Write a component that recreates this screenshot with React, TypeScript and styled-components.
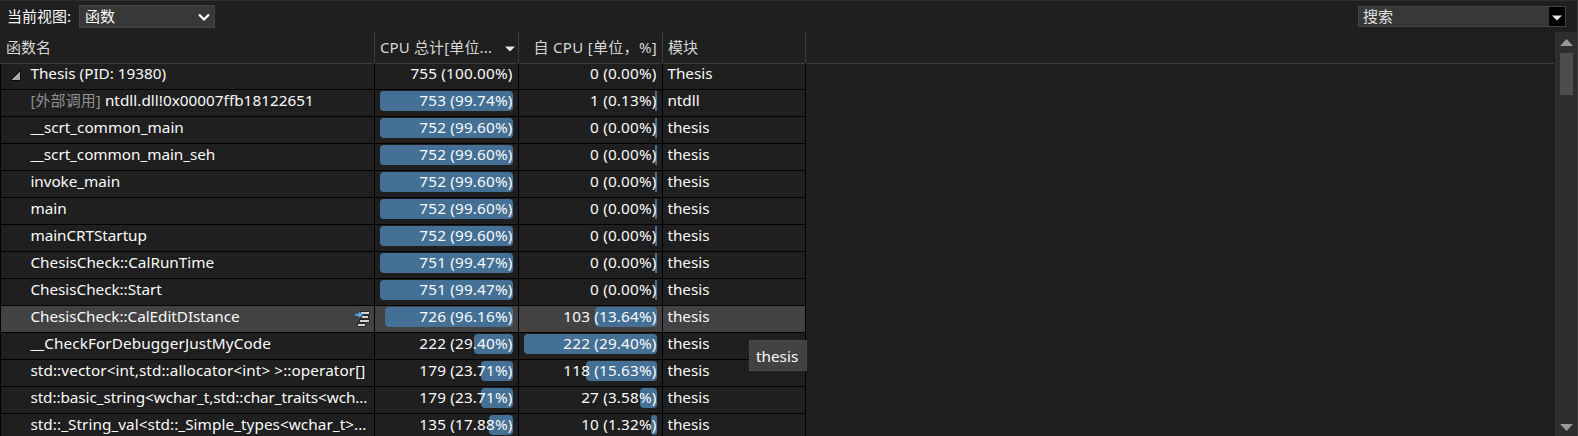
import React from "react";
import styled, { createGlobalStyle } from "styled-components";

const GlobalStyle = createGlobalStyle`
  * { box-sizing: border-box; }
  body {
    margin: 0;
    background: #1f1f1f;
    color: #fafafa;
    font-family: "Noto Sans", "Noto Sans CJK SC", sans-serif;
    font-size: 15.3px;
    line-height: 20px;
    overflow: hidden;
  }
`;

const Panel = styled.div`
  position: relative;
  display: flex;
  flex-direction: column;
  width: 1578px;
  height: 436px;
  overflow: hidden;
  background: #1f1f1f;
  border-top: 1px solid #2e2e2e;
  border-right: 1px solid #3d3d3d;
`;

const Toolbar = styled.div`
  display: flex;
  flex: none;
  align-items: flex-start;
  height: 31px;
  padding: 4px 11px 0 7px;
  font-size: 15px;
`;

const Label = styled.label`
  width: 72px;
  padding-top: 1px;
  white-space: nowrap;
`;

const Select = styled.div`
  display: flex;
  justify-content: space-between;
  width: 136px;
  height: 23px;
  padding: 0 3px 0 5px;
  background: #383838;
  border: 1px solid #434343;
`;

const SearchBox = styled.div`
  display: flex;
  justify-content: space-between;
  width: 208px;
  height: 21px;
  margin: 1px 0 0 auto;
  padding-left: 4px;
  background: #383838;
  border: 1px solid #434343;
  color: #e0e0e0;
  line-height: 18px;
`;

const SearchButton = styled.div`
  display: flex;
  width: 16px;
  height: 19px;
  background: #000;
`;

const Content = styled.div`
  display: flex;
  flex: 1;
  min-height: 0;
`;

const Table = styled.div`
  display: flex;
  flex: 1;
  flex-direction: column;
  min-width: 0;
  overflow: hidden;
`;

const columns = "374px 144px 144px 143px";

const Header = styled.div`
  display: grid;
  flex: none;
  grid-template-columns: ${columns};
  height: 32px;
  margin-right: 1px;
  padding-left: 1px;
  border-bottom: 1px solid #3d3d3d;
  color: #d6d6d6;
  font-size: 15px;
`;

const HeaderCell = styled.div<{ $right?: boolean; $spacing?: number }>`
  display: flex;
  justify-content: ${(p) => (p.$right ? "flex-end" : "flex-start")};
  padding: 5px 5px 0;
  border-right: 1px solid #3d3d3d;
  white-space: nowrap;
  letter-spacing: ${(p) => p.$spacing ?? 0}px;
`;

const Body = styled.div`
  width: 806px;
  border-left: 1px solid #000;
`;

const Row = styled.div<{ $selected: boolean; $first: boolean }>`
  display: grid;
  grid-template-columns: ${columns};
  height: 27px;
  margin-top: ${(p) => (p.$first ? -1 : 0)}px;
  background: ${(p) => (p.$selected ? "#424242" : "transparent")};
`;

const Cell = styled.div`
  display: flex;
  min-width: 0;
  border-right: 1px solid #000;
  border-bottom: 1px solid #000;
  white-space: nowrap;
`;

const NameCell = styled(Cell)`
  padding-left: 9px;
`;

const Toggle = styled.div`
  flex: none;
  width: 20.4px;
  padding-top: 6px;
  line-height: 0;
`;

const Name = styled.span<{ $spacing: number }>`
  letter-spacing: ${(p) => p.$spacing}px;
`;

const External = styled.span`
  color: #929292;
  font-size: 15px;
  letter-spacing: 0.1px;
`;

const RowAction = styled.div`
  margin: 4px 3px 0 auto;
  line-height: 0;
`;

const MetricCell = styled(Cell)`
  padding: 1px 5px 0;
`;

const Metric = styled.div<{ $bar: number }>`
  display: grid;
  justify-items: end;
  width: 133px;
  height: 20px;
  line-height: 18px;
  letter-spacing: 0.17px;

  &::before {
    content: "";
    grid-area: 1 / 1;
    width: ${(p) => p.$bar}px;
    height: 20px;
    background: #437094;
    border-radius: ${(p) => (p.$bar > 4 ? 4 : 0)}px;
  }
`;

const Value = styled.span`
  grid-area: 1 / 1;
  z-index: 1;
  padding-right: 0.4px;
`;

const ModuleCell = styled(Cell)`
  padding-left: 4.4px;
`;

const Scrollbar = styled.div`
  display: flex;
  flex: none;
  flex-direction: column;
  align-items: center;
  width: 22px;
  padding: 7px 0 5px;
  background: #2e2e2e;
`;

const Thumb = styled.div`
  width: 13px;
  height: 42px;
  margin: 7px 0 auto;
  background: #4d4d4d;
`;

const Tooltip = styled.div`
  position: absolute;
  top: 339px;
  left: 749px;
  width: 58px;
  height: 31px;
  padding: 5px 0 0 6px;
  background: #424242;
  border: 1px solid #4a4a4a;
`;

type Entry = {
  name: string;
  external?: string;
  total: string;
  totalBar: number;
  self: string;
  selfBar: number;
  module?: string;
  spacing?: number;
  root?: boolean;
  selected?: boolean;
};

const entries: Entry[] = [
  { name: "Thesis (PID: 19380)", total: "755 (100.00%)", totalBar: 0, self: "0 (0.00%)", selfBar: 0, module: "Thesis", root: true },
  { name: "ntdll.dll!0x00007ffb18122651", external: "[外部调用]", total: "753 (99.74%)", totalBar: 133, self: "1 (0.13%)", selfBar: 2, module: "ntdll", spacing: 0.02 },
  { name: "__scrt_common_main", total: "752 (99.60%)", totalBar: 133, self: "0 (0.00%)", selfBar: 2, spacing: -0.03 },
  { name: "__scrt_common_main_seh", total: "752 (99.60%)", totalBar: 133, self: "0 (0.00%)", selfBar: 2, spacing: -0.06 },
  { name: "invoke_main", total: "752 (99.60%)", totalBar: 133, self: "0 (0.00%)", selfBar: 2, spacing: -0.05 },
  { name: "main", total: "752 (99.60%)", totalBar: 133, self: "0 (0.00%)", selfBar: 2 },
  { name: "mainCRTStartup", total: "752 (99.60%)", totalBar: 133, self: "0 (0.00%)", selfBar: 2, spacing: -0.05 },
  { name: "ChesisCheck::CalRunTime", total: "751 (99.47%)", totalBar: 133, self: "0 (0.00%)", selfBar: 2 },
  { name: "ChesisCheck::Start", total: "751 (99.47%)", totalBar: 133, self: "0 (0.00%)", selfBar: 2, spacing: -0.04 },
  { name: "ChesisCheck::CalEditDIstance", total: "726 (96.16%)", totalBar: 128, self: "103 (13.64%)", selfBar: 62, spacing: -0.05, selected: true },
  { name: "__CheckForDebuggerJustMyCode", total: "222 (29.40%)", totalBar: 39, self: "222 (29.40%)", selfBar: 133, spacing: 0.1 },
  { name: "std::vector<int,std::allocator<int> >::operator[]", total: "179 (23.71%)", totalBar: 32, self: "118 (15.63%)", selfBar: 71, spacing: 0.09 },
  { name: "std::basic_string<wchar_t,std::char_traits<wch...", total: "179 (23.71%)", totalBar: 32, self: "27 (3.58%)", selfBar: 17, spacing: -0.07 },
  { name: "std::_String_val<std::_Simple_types<wchar_t>...", total: "135 (17.88%)", totalBar: 24, self: "10 (1.32%)", selfBar: 6, spacing: 0.06 },
];

const DownTriangle = () => (
  <svg width="10" height="6" viewBox="0 0 10 6">
    <path d="M0 .5h10L5 5.5z" fill="#e6e6e6" />
  </svg>
);

const SortMark = styled.div`
  display: flex;
  margin: 9px -2px 0 auto;
  height: 6px;
`;

const ArrowSlot = styled.div`
  padding: 8px 0 0 3px;
  line-height: 0;
`;

const ChevronSlot = styled.div`
  padding-top: 7px;
  margin-right: 1px;
  line-height: 0;
`;

const CallersIcon = () => (
  <svg width="17" height="17" viewBox="0 0 17 17">
    <path d="M6 1h10v4h-1v4h1v4h-4v4H3v-5h2V8h2V5H6z" fill="#2a2a2a" />
    <path d="M7 2h8v2H7zM8 6h6v2H8zM6 10h9v2H6zM4 14h7v2H4z" fill="#d2d2d2" />
    <path d="M1 3.7h3.6V1.2L9 4.8 4.6 8.4V6H1z" fill="#62b1f2" stroke="#2b4f70" strokeWidth=".6" />
  </svg>
);

export default function App() {
  return (
    <>
      <GlobalStyle />
      <Panel>
        <Toolbar>
          <Label>当前视图:</Label>
          <Select>
            函数
            <ChevronSlot>
              <svg width="12" height="9" viewBox="0 0 12 9">
                <path d="M1 1.5l5 5 5-5" fill="none" stroke="#fff" strokeWidth="2.2" />
              </svg>
            </ChevronSlot>
          </Select>
          <SearchBox>
            搜索
            <SearchButton>
              <ArrowSlot>
                <DownTriangle />
              </ArrowSlot>
            </SearchButton>
          </SearchBox>
        </Toolbar>
        <Content>
          <Table>
            <Header>
              <HeaderCell>函数名</HeaderCell>
              <HeaderCell $spacing={0.14}>
                CPU 总计[单位...
                <SortMark>
                  <DownTriangle />
                </SortMark>
              </HeaderCell>
              <HeaderCell $right $spacing={0.33}>自 CPU [单位，%]</HeaderCell>
              <HeaderCell $spacing={-0.1}>模块</HeaderCell>
            </Header>
            <Body>
              {entries.map((e) => (
                <Row key={e.name} $selected={!!e.selected} $first={!!e.root}>
                  <NameCell>
                    <Toggle>
                      {e.root && (
                        <svg width="12" height="13" viewBox="0 0 12 13">
                          <path d="M10.5 1.5v10h-10z" fill="#a8a8a8" stroke="#0c0c0c" />
                        </svg>
                      )}
                    </Toggle>
                    <Name $spacing={e.spacing ?? 0}>
                      {e.external && <External>{e.external} </External>}
                      {e.name}
                    </Name>
                    {e.selected && (
                      <RowAction>
                        <CallersIcon />
                      </RowAction>
                    )}
                  </NameCell>
                  <MetricCell>
                    <Metric $bar={e.totalBar}>
                      <Value>{e.total}</Value>
                    </Metric>
                  </MetricCell>
                  <MetricCell>
                    <Metric $bar={e.selfBar}>
                      <Value>{e.self}</Value>
                    </Metric>
                  </MetricCell>
                  <ModuleCell>{e.module ?? "thesis"}</ModuleCell>
                </Row>
              ))}
            </Body>
          </Table>
          <Scrollbar>
            <svg width="13" height="7" viewBox="0 0 13 7">
              <path d="M0 7L6.5 0 13 7z" fill="#999" />
            </svg>
            <Thumb />
            <svg width="13" height="7" viewBox="0 0 13 7">
              <path d="M0 0h13L6.5 7z" fill="#999" />
            </svg>
          </Scrollbar>
        </Content>
        <Tooltip>thesis</Tooltip>
      </Panel>
    </>
  );
}
